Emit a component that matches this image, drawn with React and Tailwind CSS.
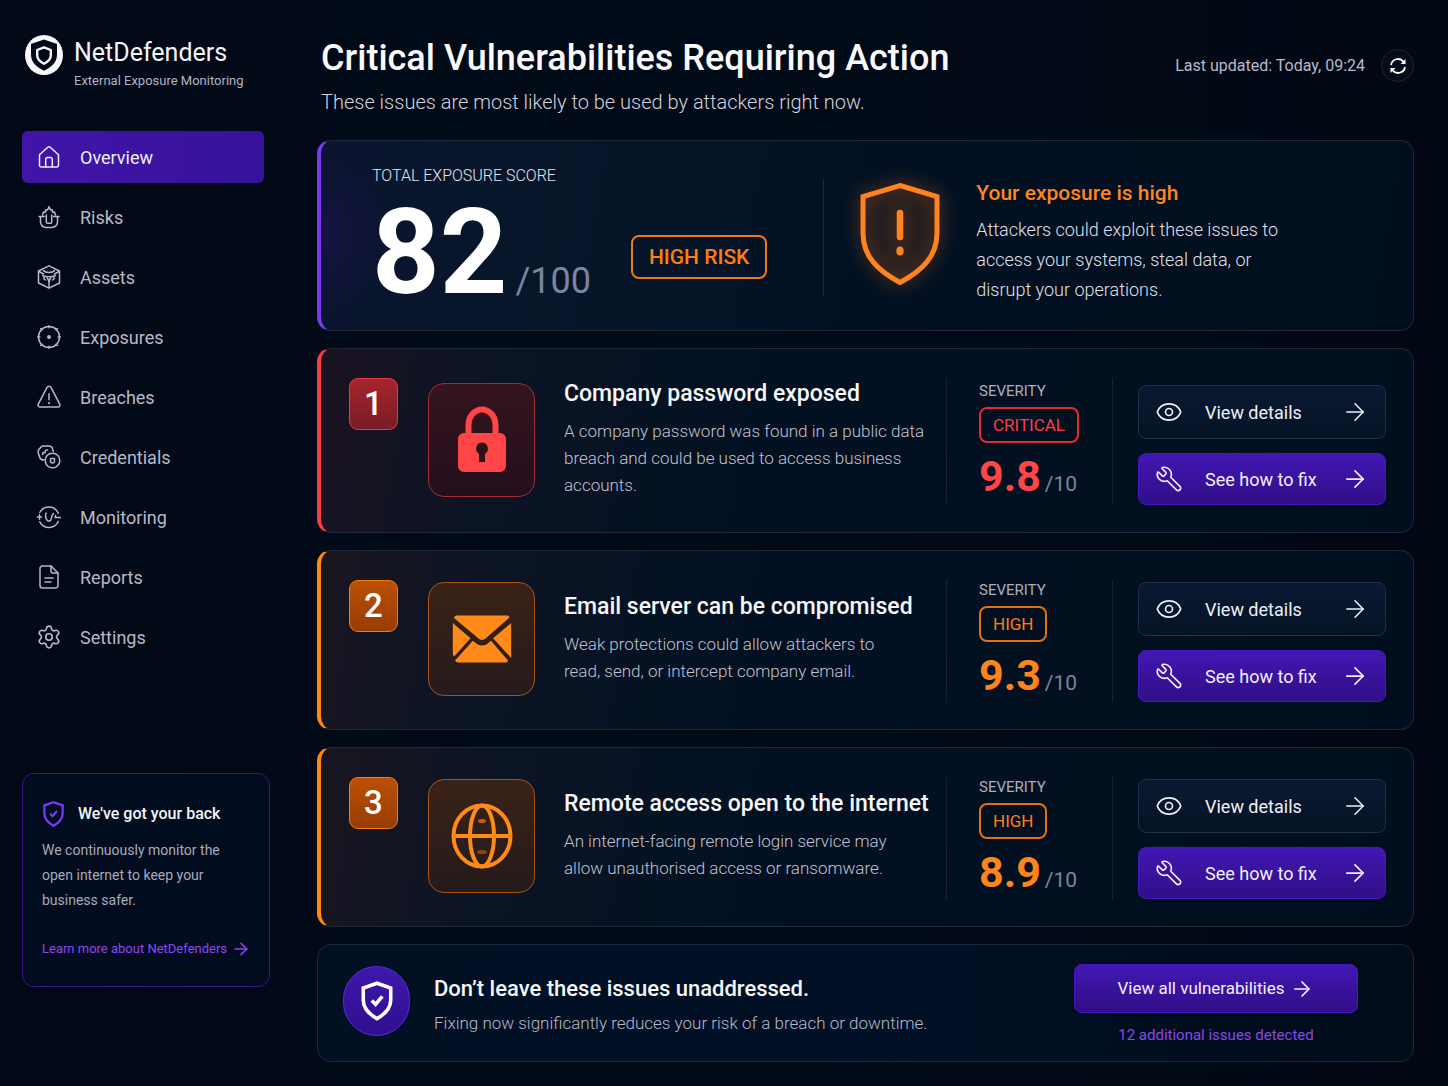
import { ArrowRight, Eye, Settings, Wrench } from 'lucide-react';

const SHIELD = 'M12 2 20.5 5v7.5c0 5.2-3.6 8.6-8.5 11.5-4.9-2.900-8.500-6.300-8.500-11.500V5z';

const NavIcon = ({ children }) => (
  <svg
    viewBox="0 0 24 24"
    className="h-6 w-6 shrink-0"
    fill="none"
    stroke="currentColor"
    strokeWidth="1.5"
    strokeLinecap="round"
    strokeLinejoin="round"
    aria-hidden="true"
  >
    {children}
  </svg>
);

const HomeIcon = () => (
  <NavIcon>
    <path d="M2.500 9.800 10.800 2.200a1.800 1.800 0 0 1 2.400 0l8.300 7.600v10.400a1.800 1.800 0 0 1-1.800 1.800H4.300a1.800 1.800 0 0 1-1.800-1.800z" />
    <path d="M8.700 22v-7.500a2 2 0 0 1 2-2h2.600a2 2 0 0 1 2 2V22" />
  </NavIcon>
);

const RisksIcon = () => (
  <NavIcon>
    <path d="M5.500 10 6.500 7l2 .2.200-2.400 1.800.1L12 1.800l1.500 3.100 1.800-.1.200 2.400 2-.2 1 3" />
    <path d="M2 11.500h5.500M16.500 11.500H22M3.500 11.500V17a5.500 5.500 0 0 0 5.500 5.500h6a5.500 5.500 0 0 0 5.500-5.500v-5.500" />
    <path d="M9.300 10v7a1.300 1.300 0 0 0 1.300 1.300h2.800a1.300 1.300 0 0 0 1.300-1.300v-7" />
  </NavIcon>
);

const AssetsIcon = () => (
  <NavIcon>
    <path d="M12 .8 22.500 6v12L12 23.200 1.500 18V6z" />
    <path d="M2 6.500 6.500 9M22 6.500 17.500 9M12 14v8.500" />
    <path d="M6.500 5.500c2 2.600 9 2.600 11 0M5.500 10.500c3.500 1.800 9.500 1.800 13 0M7 11v3l1.500 1M17 11v3l-1.500 1M10.200 13l1.800 3.500 1.800-3.500" />
  </NavIcon>
);

const ExposuresIcon = () => (
  <NavIcon>
    <circle cx="12" cy="12" r="10.500" />
    <path d="M12 .8v2M12 21.200v2M.8 12h2M21.200 12h2M19 4.700l1.500-1.200M19 19.300l1.500 1.200M5 19.300l-1.500 1.200M5 4.700 3.700 3.600" />
    <circle cx="12" cy="12" r="1.200" fill="currentColor" />
  </NavIcon>
);

const BreachesIcon = () => (
  <NavIcon>
    <path d="M10 2.300a2.300 2.300 0 0 1 4 0l8.700 16.800a2 2 0 0 1-1.800 2.900H3.100a2 2 0 0 1-1.800-2.900z" />
    <path d="M12 8.800v6" />
    <path d="M12 18v.2" strokeWidth="2" />
  </NavIcon>
);

const CredentialsIcon = () => (
  <NavIcon>
    <path d="M7 14.800a4 4 0 0 1-4.500-3L1.300 8a4 4 0 0 1 1-4L4 2a3 3 0 0 1 2.500-1H12c1.500 0 3 1.200 3.500 2.700l.8 2.800" />
    <circle cx="15.500" cy="15.500" r="7.300" />
    <path d="M5.500 9.500 6 7.500l2 .2L8.500 5.500l2-.5" />
    <path d="M13.500 13.500h4v2.500a2 2 0 0 1-4 0z" />
  </NavIcon>
);

const MonitoringIcon = () => (
  <NavIcon>
    <path d="M2.800 7.500a10.300 10.300 0 0 1 18.500.8M21.300 16.500a10.300 10.300 0 0 1-18.500.3" />
    <path d="M.3 12H4.500M2.500 9.800v4.400M18 12.500h5.500M18.500 10.500v2" />
    <path d="M9 8c-.8 2.500-.4 6 2 8 2.600.6 3.200-1.500 3.700-3.800.3-1.800.8-2.700 1.800-3.700" />
  </NavIcon>
);

const ReportsIcon = () => (
  <NavIcon>
    <path d="M14 1H5.500A2.500 2.500 0 0 0 3 3.500v17A2.500 2.500 0 0 0 5.500 23h13a2.500 2.500 0 0 0 2.500-2.500V8z" />
    <path d="M14 1v5a2 2 0 0 0 2 2h5M8 13h8M8 17h6" />
  </NavIcon>
);

const SettingsIcon = () => <Settings className="-m-px h-[26px] w-[26px] shrink-0" strokeWidth={1.5} />;

const ShieldCheck = ({ className, strokeWidth = 2 }) => (
  <svg
    viewBox="2 0 20 26"
    className={className}
    fill="none"
    stroke="currentColor"
    strokeWidth={strokeWidth}
    strokeLinejoin="miter"
    aria-hidden="true"
  >
    <path d={SHIELD} />
    <path d="m8.800 12.700 2.300 2.400 4.200-5" />
  </svg>
);

const Logo = () => (
  <svg viewBox="0 0 38 40" className="h-10 w-[38px] shrink-0" aria-hidden="true">
    <ellipse cx="19" cy="20" rx="19" ry="20" fill="#f7f7fb" />
    <path d="M19 4.500 32 9v10.500c0 8-5.500 12.500-13 16.300C11.500 32 6 27.500 6 19.500V9z" fill="#020a18" />
    <path
      d="M19 12.300 25.800 15v5.500c0 4-2.900 6.200-6.800 8.300-3.900-2.100-6.800-4.300-6.800-8.300V15z"
      fill="none"
      stroke="#f7f7fb"
      strokeWidth="2.400"
      strokeLinejoin="round"
    />
  </svg>
);

const AlertShield = () => (
  <svg
    viewBox="0 0 80 104"
    className="mb-2 h-[104px] w-20 shrink-0 overflow-visible drop-shadow-[0_0_9px_rgba(249,115,22,0.55)]"
    aria-hidden="true"
  >
    <path
      d="M40 3.500 77 14.500V51c0 24-15.500 38-37 49.500C18.500 89 3 75 3 51V14.500z"
      fill="#f97316"
      fillOpacity="0.08"
      stroke="#ff8420"
      strokeWidth="5"
    />
    <path d="M40 31v24" stroke="#ff8420" strokeWidth="6.500" strokeLinecap="round" />
    <ellipse cx="40" cy="69" rx="3.700" ry="4.500" fill="#ff8420" />
  </svg>
);

const LockIcon = () => (
  <svg viewBox="0 0 50 68" className="h-[68px] w-[50px]" fill="none" aria-hidden="true">
    <path d="M11.500 28V19a13.500 15.500 0 0 1 27 0v9" stroke="#ff4545" strokeWidth="6" />
    <path
      fillRule="evenodd"
      fill="#ff4545"
      d="M7 27h36a6 6 0 0 1 6 6v27a6 6 0 0 1-6 6H7a6 6 0 0 1-6-6V33a6 6 0 0 1 6-6zm18 9.500a6 6.200 0 0 0-3 11.500V56h6v-8a6 6.200 0 0 0-3-11.500z"
    />
  </svg>
);

const MailIcon = () => (
  <svg viewBox="0 0 60 48" className="h-12 w-[60px]" fill="#ff8a1a" aria-hidden="true">
    <path d="M4 .5h52a3 3 0 0 1 1.500 2L33.500 23.500a5 5 0 0 1-7 0L2 3A3 3 0 0 1 4 .5z" />
    <path d="M.8 8 18.500 23.200 2.200 41.500A4 4 0 0 1 .8 39z" />
    <path d="M59.200 8v35L41 23.200z" />
    <path d="M20.800 25.800 24 28.200c3.800 3 8.500 3 12 0l3-2.500L56 45.500a4 4 0 0 1-1.500 2H6a4 4 0 0 1-3-2z" />
  </svg>
);

const GlobeIcon = () => (
  <svg viewBox="0 0 62 66" className="h-[66px] w-[62px]" fill="none" stroke="#ff8a1a" strokeWidth="4" aria-hidden="true">
    <ellipse cx="31" cy="33" rx="28.500" ry="30.500" />
    <ellipse cx="31" cy="33" rx="12" ry="30.500" />
    <path d="M2 33h58" />
    <ellipse cx="31" cy="18" rx="4" ry="2" fill="#c2600f" stroke="none" />
    <ellipse cx="31" cy="49" rx="5" ry="2" fill="#8a4512" stroke="none" />
  </svg>
);

const RefreshIcon = () => (
  <svg viewBox="0 0 18 18" className="h-[18px] w-[18px]" fill="none" stroke="currentColor" strokeWidth="1.800" aria-hidden="true">
    <path d="M2 8a7 7 0 0 1 12.500-3.200M16 10a7 7 0 0 1-12.500 3.200" />
    <path d="M16.500 2v5h-5zM1.500 16v-5h5z" fill="currentColor" stroke="none" />
  </svg>
);

const navItems = [
  { label: 'Overview', icon: HomeIcon, active: true },
  { label: 'Risks', icon: RisksIcon },
  { label: 'Assets', icon: AssetsIcon },
  { label: 'Exposures', icon: ExposuresIcon },
  { label: 'Breaches', icon: BreachesIcon },
  { label: 'Credentials', icon: CredentialsIcon },
  { label: 'Monitoring', icon: MonitoringIcon },
  { label: 'Reports', icon: ReportsIcon },
  { label: 'Settings', icon: SettingsIcon },
];

const issues = [
  {
    id: 1,
    title: 'Company password exposed',
    description: 'A company password was found in a public data breach and could be used to access business accounts.',
    severity: 'CRITICAL',
    score: '9.8',
    tone: 'red',
    icon: LockIcon,
  },
  {
    id: 2,
    title: 'Email server can be compromised',
    description: 'Weak protections could allow attackers to\nread, send, or intercept company email.',
    severity: 'HIGH',
    score: '9.3',
    tone: 'orange',
    icon: MailIcon,
  },
  {
    id: 3,
    title: 'Remote access open to the internet',
    description: 'An internet-facing remote login service may\nallow unauthorised access or ransomware.',
    severity: 'HIGH',
    score: '8.9',
    tone: 'orange',
    icon: GlobeIcon,
  },
];

const tones = {
  red: {
    card: 'border-l-[#f93d44] bg-[linear-gradient(100deg,#1b1220_0%,#0b1424_16%,#021122_40%,#010e1d_100%)]',
    badge: 'border-[#e93a40] bg-linear-to-b from-[#a5252d] to-[#7c1b26]',
    box: 'border-[#a52a33] bg-linear-to-b from-[#35141f] to-[#230f1b]',
    pill: 'border-[#e5292f] text-[#ff3b40]',
    score: 'text-[#ff4545]',
  },
  orange: {
    card: 'border-l-[#ff8a0f] bg-[linear-gradient(100deg,#191620_0%,#0b1424_16%,#021122_40%,#010e1d_100%)]',
    badge: 'border-[#f57c10] bg-linear-to-b from-[#bd4f04] to-[#973d04]',
    box: 'border-[#a9530f] bg-linear-to-b from-[#3a2217] to-[#251a1b]',
    pill: 'border-[#e5700c] text-[#ff7d14]',
    score: 'text-[#ff851b]',
  },
};

const Sidebar = () => (
  <aside className="flex w-[248px] shrink-0 flex-col">
    <div className="flex items-start gap-[11px] pl-[3px]">
      <Logo />
      <div>
        <p className="text-[25px] leading-9 text-[#f4f4fa]">NetDefenders</p>
        <p className="text-[13px] leading-5 text-[#b3b3c2]">External Exposure Monitoring</p>
      </div>
    </div>

    <nav className="mt-10 mr-1.5 flex flex-col gap-2">
      {navItems.map(({ label, icon: Icon, active }) => (
        <a
          key={label}
          href="#"
          className={`flex h-[52px] items-center gap-[19px] rounded-md px-[15px] text-[18px] ${
            active ? 'bg-linear-to-r from-[#4015a8] to-[#36129a] text-[#f0edff]' : 'text-[#b9b8c8]'
          }`}
        >
          <Icon />
          {label}
        </a>
      ))}
    </nav>

    <section className="mt-[110px] rounded-xl border border-[#371b86] bg-[#010d1e] px-[19px] pt-[26px] pb-[25px]">
      <div className="flex items-center gap-[13px]">
        <ShieldCheck className="h-7 w-[23px] text-[#8038ff]" />
        <h2 className="text-[16px] leading-7 font-medium text-[#f4f4fa]">We've got your back</h2>
      </div>
      <p className="mt-2.5 text-[14px] leading-[25px] text-[#a9a9b9]">
        We continuously monitor the open internet to keep your business safer.
      </p>
      <a href="#" className="mt-6 flex items-center gap-1 text-[13px] leading-6 whitespace-nowrap text-[#9046f5]">
        Learn more about NetDefenders
        <ArrowRight className="h-5 w-5 shrink-0" strokeWidth={1.8} />
      </a>
    </section>
  </aside>
);

const ExposureScore = () => (
  <section className="flex items-center rounded-[14px] border border-l-4 border-[#1d2838] border-l-[#7a38f0] bg-[radial-gradient(ellipse_70px_80px_at_0%_50%,#22125480_0%,transparent_100%),linear-gradient(100deg,#0b1430_0%,#07162a_16%,#021122_50%,#010e1d_100%)] pt-[25px] pb-5">
    <div className="w-[46%] pl-[51px]">
      <h2 className="text-[16px] leading-5 font-light text-[#e6e6ee]">TOTAL EXPOSURE SCORE</h2>
      <div className="mt-2.5 flex items-center gap-10">
        <p className="flex items-baseline gap-2">
          <span className="text-[118px] leading-[114px] font-bold text-white">82</span>
          <span className="text-[36px] text-[#7d849f]">/100</span>
        </p>
        <span className="mt-2 rounded-lg border-2 border-[#f27a0c] px-4 py-1.5 text-[21px] leading-7 font-medium text-[#ff7d10]">
          HIGH RISK
        </span>
      </div>
    </div>
    <div className="flex flex-1 items-center gap-9">
      <div className="h-[118px] w-px bg-[#1c2636]" />
      <AlertShield />
      <div className="max-w-[320px] pt-2">
        <h2 className="text-[21px] leading-7 font-medium text-[#ff8420]">Your exposure is high</h2>
        <p className="mt-2 text-[18px] leading-[30px] font-light text-[#e0e0ea]">
          Attackers could exploit these issues to access your systems, steal data, or disrupt your operations.
        </p>
      </div>
    </div>
  </section>
);

const IssueCard = ({ issue }) => {
  const tone = tones[issue.tone];
  const Icon = issue.icon;
  return (
    <li className={`flex rounded-[14px] border border-l-4 border-[#1d2838] pt-[29px] pr-[27px] pb-[27px] pl-7 ${tone.card}`}>
      <span
        className={`flex h-[52px] w-[49px] shrink-0 items-center justify-center rounded-[9px] border text-[33px] font-medium text-white ${tone.badge}`}
      >
        {issue.id}
      </span>
      <div
        className={`mb-1 ml-[30px] flex h-[114px] w-[107px] shrink-0 items-center justify-center self-center rounded-2xl border ${tone.box}`}
      >
        <Icon />
      </div>
      <div className="ml-[29px] min-w-0 flex-1 self-center pb-1.5">
        <h3 className="text-[23px] leading-8 font-medium whitespace-nowrap text-[#f6f6fb]">{issue.title}</h3>
        <p className="mt-2 pr-3 text-[17px] leading-[27px] font-light whitespace-pre-line text-[#c2c2d0]">{issue.description}</p>
      </div>
      <div className="flex w-[166px] shrink-0 flex-col items-start justify-center border-l border-[#182333] pl-8">
        <span className="text-[15px] leading-5 text-[#aeaebf]">SEVERITY</span>
        <span className={`mt-1.5 rounded-lg border-2 px-3 text-[17px] leading-8 ${tone.pill}`}>{issue.severity}</span>
        <p className="mt-1.5 flex items-baseline gap-1">
          <span className={`text-[43px] leading-[54px] font-bold ${tone.score}`}>{issue.score}</span>
          <span className="text-[21px] leading-6 text-[#7d849f]">/10</span>
        </p>
      </div>
      <div className="flex shrink-0 flex-col justify-end gap-3.5 border-l border-[#182333] pl-[25px]">
        <button
          type="button"
          className="flex h-[54px] w-[248px] items-center gap-[22px] rounded-lg border border-[#232f44] bg-linear-to-b from-[#091932] to-[#061326] px-4 text-left text-[18px] text-[#f0f0f8]"
        >
          <Eye className="h-7 w-7" strokeWidth={1.4} />
          <span className="flex-1">View details</span>
          <ArrowRight className="h-7 w-7" strokeWidth={1.3} />
        </button>
        <button
          type="button"
          className="flex h-[52px] w-[248px] items-center gap-[22px] rounded-lg border border-[#4419bd] bg-linear-to-b from-[#4217b4] to-[#300e87] px-4 text-left text-[18px] text-[#f3efff]"
        >
          <Wrench className="h-7 w-7 -scale-x-100" strokeWidth={1.4} />
          <span className="flex-1">See how to fix</span>
          <ArrowRight className="h-7 w-7" strokeWidth={1.5} />
        </button>
      </div>
    </li>
  );
};

const CallToAction = () => (
  <section className="flex items-center rounded-[14px] border border-[#1d2838] bg-[linear-gradient(100deg,#011023_0%,#011026_50%,#010c1b_100%)] pt-[19px] pr-[55px] pb-4 pl-[25px]">
    <div className="mb-2 flex h-[70px] w-[67px] shrink-0 items-center justify-center rounded-full border border-[#5a2ae0] bg-linear-to-b from-[#3f17ae] to-[#2f0f8c] text-white">
      <ShieldCheck className="h-[42px] w-[34px]" strokeWidth={2.2} />
    </div>
    <div className="ml-6 flex-1">
      <h2 className="text-[22px] leading-8 font-medium text-[#f6f6fb]">Don’t leave these issues unaddressed.</h2>
      <p className="mt-1 text-[17px] leading-7 font-light text-[#b9b9c8]">
        Fixing now significantly reduces your risk of a breach or downtime.
      </p>
    </div>
    <div className="flex flex-col items-center">
      <button
        type="button"
        className="flex h-[49px] w-[284px] items-center justify-center gap-1.5 rounded-lg border border-[#4419bd] bg-linear-to-b from-[#4217b4] to-[#300e87] text-[17px] text-[#f3efff]"
      >
        View all vulnerabilities
        <ArrowRight className="h-6 w-6" strokeWidth={1.7} />
      </button>
      <a href="#" className="mt-3 text-[15px] leading-5 text-[#8a48e6]">12 additional issues detected</a>
    </div>
  </section>
);

const App = () => {
  return (
    <div className="flex min-h-screen gap-[47px] bg-linear-to-r from-[#010916] via-[#010b18] to-[#010814] px-[22px] pt-[35px] pr-[34px] pb-6 font-['Roboto','Inter',sans-serif]">
      <Sidebar />
      <main className="min-w-0 flex-1">
        <header className="mb-[23px] flex items-start justify-between pl-1">
          <div>
            <h1 className="text-[36px] leading-[46px] font-medium text-[#fafafd]">Critical Vulnerabilities Requiring Action</h1>
            <p className="mt-1.5 text-[20px] leading-[30px] font-light text-[#d2d2de]">
              These issues are most likely to be used by attackers right now.
            </p>
          </div>
          <div className="mt-3.5 flex items-center gap-4">
            <span className="text-[16px] text-[#b9b9c8]">Last updated: Today, 09:24</span>
            <button
              type="button"
              aria-label="Refresh"
              className="flex h-[33px] w-[33px] items-center justify-center rounded-full border border-[#1d2636] bg-[#020d1c] text-white"
            >
              <RefreshIcon />
            </button>
          </div>
        </header>

        <div className="flex flex-col gap-[17px]">
          <ExposureScore />
          <ol className="flex flex-col gap-[17px]">
            {issues.map((issue) => (
              <IssueCard key={issue.id} issue={issue} />
            ))}
          </ol>
          <CallToAction />
        </div>
      </main>
    </div>
  );
};

export default App;
